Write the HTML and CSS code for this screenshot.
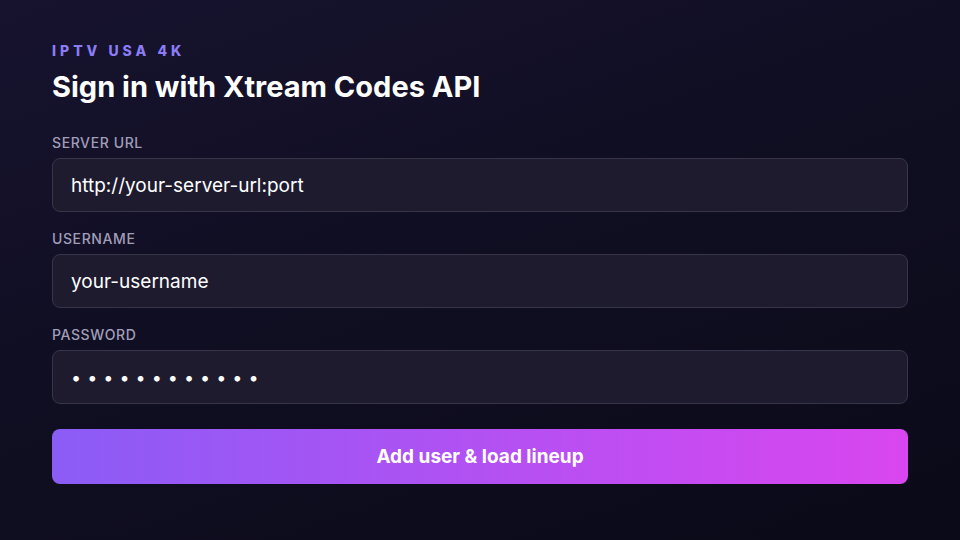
FILE: index.html
```html
<!DOCTYPE html>
<html lang="en">
<head>
    <meta charset="UTF-8">
    <meta name="viewport" content="width=device-width, initial-scale=1.0">
    <title>Sign in - IPTV USA 4K</title>
    <link rel="stylesheet" href="styles.css">
</head>
<body>
    <div class="container">
        <div class="header">
            <p class="eyebrow">IPTV USA 4K</p>
            <h1>Sign in with Xtream Codes API</h1>
        </div>

        <form id="loginForm">
            <div class="form-group">
                <label for="server">Server URL</label>
                <input type="text" id="server" name="server" value="http://your-server-url:port">
            </div>

            <div class="form-group">
                <label for="username">Username</label>
                <input type="text" id="username" name="username" value="your-username">
            </div>

            <div class="form-group">
                <label for="password">Password</label>
                <input type="password" id="password" name="password" value="yourpassword">
            </div>

            <button type="submit" class="submit-btn">Add user &amp; load lineup</button>
        </form>
    </div>
</body>
</html>
```

FILE: styles.css
```css
* {
    margin: 0;
    padding: 0;
    box-sizing: border-box;
}

html, body {
    height: 100%;
}

body {
    font-family: Inter, 'Noto Sans', sans-serif;
    background: linear-gradient(160deg, #17132f 0%, #100e22 45%, #0b0a18 100%);
    color: #fff;
    overflow: hidden;
}

.container {
    padding: 43px 52px;
}

.header {
    margin-bottom: 32px;
}

.eyebrow {
    color: #8b7cf6;
    font-size: 14px;
    font-weight: 800;
    letter-spacing: 4px;
    line-height: 16px;
    margin-bottom: 12px;
}

.header h1 {
    font-size: 29px;
    font-weight: 700;
    line-height: 32px;
}

.form-group {
    margin-bottom: 19px;
}

label {
    display: block;
    color: #a19eb8;
    font-size: 14px;
    font-weight: 500;
    line-height: 16px;
    letter-spacing: 0.6px;
    text-transform: uppercase;
    margin-bottom: 7px;
}

input {
    display: block;
    width: 100%;
    height: 54px;
    padding: 0 18px;
    background: #1e1b2f;
    border: 1px solid #38354a;
    border-radius: 8px;
    color: #fff;
    font-family: inherit;
    font-size: 19px;
    outline: none;
}

input[type="password"] {
    font-size: 18px;
    letter-spacing: 6px;
}

.submit-btn {
    display: block;
    width: 100%;
    height: 55px;
    margin-top: 25px;
    background: linear-gradient(90deg, #8b5cf6 0%, #d946ef 100%);
    color: #fff;
    border: none;
    border-radius: 8px;
    font-family: inherit;
    font-size: 19px;
    font-weight: 700;
    cursor: pointer;
}
```
